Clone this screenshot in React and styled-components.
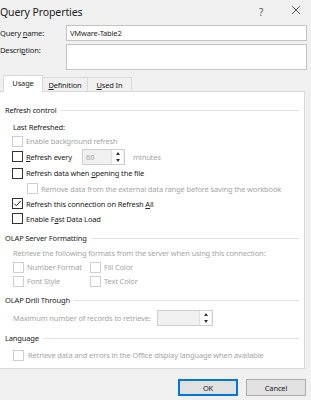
import styled, { createGlobalStyle } from "styled-components";

const GlobalStyle = createGlobalStyle`
  body {
    margin: 0;
    background: #f0f0f0;
    font-family: "Noto Sans", "Segoe UI", sans-serif;
    font-size: 7.5px;
    letter-spacing: -0.15px;
    color: #1e1e1e;
  }
`;

const Dialog = styled.div`
  width: 311px;
  height: 400px;
  overflow: hidden;
  display: flex;
  flex-direction: column;
`;

const TitleBar = styled.div`
  height: 23px;
  display: flex;
  align-items: center;
  padding-right: 5px;
  color: #222;
`;

const Title = styled.div`
  flex: 1;
  font-size: 10.5px;
  letter-spacing: -0.1px;
`;

const TitleBtn = styled.div`
  width: ${(p) => p.$w}px;
  margin-left: ${(p) => p.$ml || 0}px;
  text-align: center;
  color: #555;
  font-size: ${(p) => p.$size || 9}px;
`;

const Fields = styled.div`
  display: grid;
  grid-template-columns: 66px 241px;
  row-gap: 3px;
  margin-top: 2px;
`;

const Label = styled.label`
  line-height: 10px;
  padding-top: ${(p) => p.$pt || 0}px;
  align-self: ${(p) => (p.$top ? "start" : "center")};
`;

const TextBox = styled.div`
  box-sizing: border-box;
  height: ${(p) => p.$h}px;
  background: #fff;
  border: 1px solid #c4c4c4;
  padding: 2px 3px;
  line-height: 10px;
`;

const TabRow = styled.div`
  display: flex;
  height: 14px;
  margin-top: 7px;
  padding-left: 4px;
  position: relative;
  z-index: 1;
`;

const Tab = styled.div`
  box-sizing: border-box;
  width: ${(p) => p.$w}px;
  height: ${(p) => (p.$active ? 17 : 14)}px;
  margin-top: ${(p) => (p.$active ? -2 : 0)}px;
  background: ${(p) => (p.$active ? "#fff" : "#f0f0f0")};
  border: 1px solid #d9d9d9;
  border-bottom: none;
  margin-left: -1px;
  display: flex;
  align-items: center;
  justify-content: center;
  padding-bottom: ${(p) => (p.$active ? 2 : 0)}px;
  color: #222;
`;

const Panel = styled.div`
  box-sizing: border-box;
  width: 305px;
  height: 278px;
  background: #fff;
  border: 1px solid #d9d9d9;
  border-left: none;
  padding-top: 12px;
`;

const Section = styled.div`
  margin-top: ${(p) => p.$mt || 0}px;
`;

const Heading = styled.div`
  height: 12px;
  display: flex;
  align-items: center;
  padding-left: 5px;
  margin-bottom: ${(p) => p.$mb || 0}px;
  color: #1a1a1a;
  &::after {
    content: "";
    flex: 1;
    height: 1px;
    background: #e3e3e3;
    margin: 0 5px 0 4px;
  }
`;

const Row = styled.div`
  height: ${(p) => p.$h || 15}px;
  display: flex;
  align-items: center;
  padding-left: ${(p) => p.$indent || 12}px;
  color: ${(p) => (p.$disabled ? "#a6a6a6" : "#222")};
  white-space: nowrap;
`;

const Check = styled.span`
  box-sizing: border-box;
  width: 11px;
  height: 11px;
  flex: none;
  border: 1px solid ${(p) => (p.$disabled ? "#cfcfcf" : "#333")};
  background: #fff;
  margin-right: ${(p) => p.$mr || 3}px;
  display: inline-flex;
  align-items: center;
  justify-content: center;
`;

const Cell = styled.span`
  display: inline-flex;
  align-items: center;
  flex: none;
  width: ${(p) => p.$w}px;
`;

const Muted = styled.span`
  margin-left: ${(p) => p.$ml || 0}px;
  color: #a6a6a6;
`;

const Spin = styled.div`
  box-sizing: border-box;
  width: ${(p) => p.$w}px;
  height: 16px;
  border: 1px solid #cfcfcf;
  background: #f0f0f0;
  display: flex;
  align-items: center;
  padding-left: 3px;
  color: #a6a6a6;
`;

const SpinValue = styled.span`
  flex: 1;
`;

const SpinButtons = styled.div`
  width: 11px;
  height: 14px;
  margin-right: 1px;
  display: flex;
  flex-direction: column;
  background: #fff;
  border-left: 1px solid #e0e0e0;
`;

const SpinBtn = styled.div`
  flex: 1;
  display: flex;
  align-items: center;
  justify-content: center;
`;

const Arrow = styled.span`
  width: 0;
  height: 0;
  border-left: 2.5px solid transparent;
  border-right: 2.5px solid transparent;
  ${(p) => (p.$down ? "border-top" : "border-bottom")}: 3px solid #333;
`;

const Footer = styled.div`
  display: flex;
  justify-content: flex-end;
  gap: 8px;
  padding: 10px 5px 0 0;
  position: relative;
`;

const Button = styled.button`
  box-sizing: border-box;
  width: 60px;
  height: 17px;
  font: inherit;
  letter-spacing: inherit;
  color: #222;
  background: #e1e1e1;
  border: 1px solid ${(p) => (p.$primary ? "#0078d7" : "#adadad")};
  box-shadow: ${(p) => (p.$primary ? "inset 0 0 0 1px #0078d7" : "none")};
  padding: 0;
`;

const Grip = styled.svg`
  position: absolute;
  right: 0;
  bottom: -10px;
`;

function Tick() {
  return (
    <svg width="9" height="9" viewBox="0 0 9 9">
      <path d="M1.2 4.6 L3.4 6.8 L7.8 1.8" fill="none" stroke="#222" strokeWidth="1" />
    </svg>
  );
}

function CloseIcon() {
  return (
    <svg width="10" height="10" viewBox="0 0 10 10">
      <path d="M1 1 L9 9 M9 1 L1 9" stroke="#444" strokeWidth="0.9" />
    </svg>
  );
}

function Spinner({ w, value }) {
  return (
    <Spin $w={w}>
      <SpinValue>{value}</SpinValue>
      <SpinButtons>
        <SpinBtn>
          <Arrow />
        </SpinBtn>
        <SpinBtn>
          <Arrow $down />
        </SpinBtn>
      </SpinButtons>
    </Spin>
  );
}

export default function App() {
  return (
    <>
      <GlobalStyle />
      <Dialog>
        <TitleBar>
          <Title>Query Properties</Title>
          <TitleBtn $w={14} $size={10}>?</TitleBtn>
          <TitleBtn $w={20} $ml={18}>
            <CloseIcon />
          </TitleBtn>
        </TitleBar>

        <Fields>
          <Label>
            <span>
              Query <u>n</u>ame:
            </span>
          </Label>
          <TextBox $h={16}>VMware-Table2</TextBox>
          <Label $top $pt={1}>
            <span>
              Descri<u>p</u>tion:
            </span>
          </Label>
          <TextBox $h={26} />
        </Fields>

        <TabRow>
          <Tab $w={40} $active>
            Usage
          </Tab>
          <Tab $w={46}>
            <span>
              <u>D</u>efinition
            </span>
          </Tab>
          <Tab $w={45}>
            <span>
              <u>U</u>sed In
            </span>
          </Tab>
        </TabRow>

        <Panel>
          <Section>
            <Heading $mb={4}>Refresh control</Heading>
            <Row $h={14} $indent={13}>
              <span>Last Refreshed:</span>
            </Row>
            <Row $h={14} $disabled>
              <Check $disabled />
              <span>Enable background refresh</span>
            </Row>
            <Row $h={17}>
              <Check />
              <Cell $w={56}>
                <span>
                  <u>R</u>efresh every
                </span>
              </Cell>
              <Spinner w={43} value="60" />
              <Muted $ml={8}>minutes</Muted>
            </Row>
            <Row $h={16}>
              <Check />
              <span>
                Refresh data when <u>o</u>pening the file
              </span>
            </Row>
            <Row $h={15} $indent={27} $disabled>
              <Check $disabled />
              <span>Remove data from the external data range before saving the workbook</span>
            </Row>
            <Row $h={15}>
              <Check>
                <Tick />
              </Check>
              <span>
                Refresh this connection on Refresh <u>A</u>ll
              </span>
            </Row>
            <Row $h={15}>
              <Check />
              <span>
                Enable F<u>a</u>st Data Load
              </span>
            </Row>
          </Section>

          <Section $mt={6}>
            <Heading $mb={2}>OLAP Server Formatting</Heading>
            <Row $h={14} $indent={13} $disabled>
              <span>Retrieve the following formats from the server when using this connection:</span>
            </Row>
            <Row $h={14} $indent={13} $disabled>
              <Cell $w={77}>
                <Check $disabled />
                <span>Number Format</span>
              </Cell>
              <Check $disabled />
              <span>Fill Color</span>
            </Row>
            <Row $h={14} $indent={13} $disabled>
              <Cell $w={77}>
                <Check $disabled />
                <span>Font Style</span>
              </Cell>
              <Check $disabled />
              <span>Text Color</span>
            </Row>
          </Section>

          <Section $mt={6}>
            <Heading $mb={3}>OLAP Drill Through</Heading>
            <Row $h={18} $indent={13} $disabled>
              <Cell $w={144}>
                <span>Maximum number of records to retrieve:</span>
              </Cell>
              <Spinner w={56} value="" />
            </Row>
          </Section>

          <Section $mt={5}>
            <Heading $mb={4}>Language</Heading>
            <Row $h={14} $indent={13} $disabled>
              <Check $disabled $mr={4} />
              <span>Retrieve data and errors in the Office display language when available</span>
            </Row>
          </Section>
        </Panel>

        <Footer>
          <Button $primary>OK</Button>
          <Button>Cancel</Button>
          <Grip width="6" height="6" viewBox="0 0 6 6">
            <rect x="4" y="0" width="1" height="1" fill="#b0b0b0" />
            <rect x="2" y="2" width="1" height="1" fill="#b0b0b0" />
            <rect x="4" y="2" width="1" height="1" fill="#b0b0b0" />
            <rect x="0" y="4" width="1" height="1" fill="#b0b0b0" />
            <rect x="2" y="4" width="1" height="1" fill="#b0b0b0" />
            <rect x="4" y="4" width="1" height="1" fill="#b0b0b0" />
          </Grip>
        </Footer>
      </Dialog>
    </>
  );
}
